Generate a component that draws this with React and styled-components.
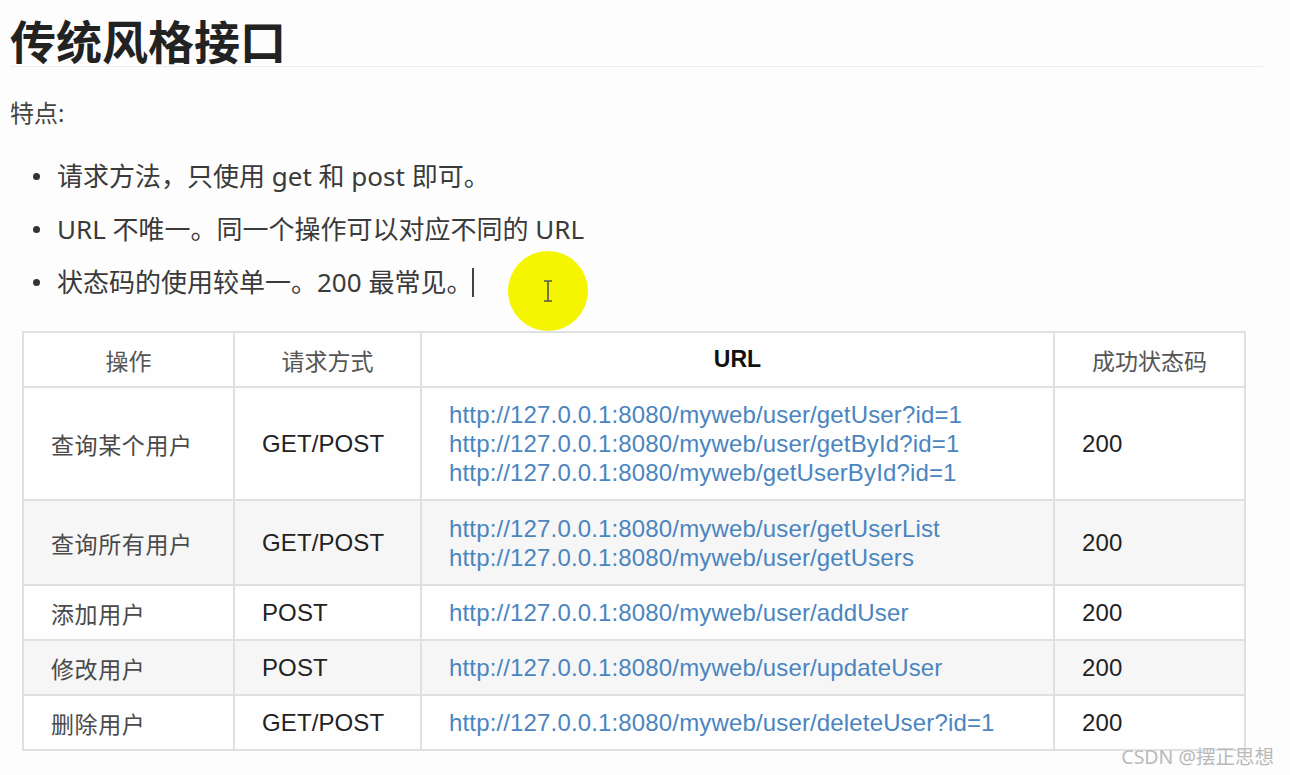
import React from "react";
import styled, { createGlobalStyle } from "styled-components";

const GlobalStyle = createGlobalStyle`
  html, body {
    margin: 0;
    padding: 0;
    background: #fdfdfd;
  }
  body {
    font-family: "Noto Sans", "Noto Sans CJK SC", sans-serif;
    color: #333;
  }
`;

const Page = styled.div`
  position: relative;
  width: 1290px;
  height: 775px;
  overflow: hidden;
  padding: 12px 27px 0 10px;
  box-sizing: border-box;
`;

const Title = styled.h1`
  margin: 0;
  font-family: "Noto Sans CJK SC", sans-serif;
  font-size: 46px;
  font-weight: 700;
  line-height: 54px;
  color: #222;
  border-bottom: 1px solid #ececec;
`;

const Lead = styled.p`
  margin: 28px 0 0;
  font-size: 24px;
  line-height: 36px;
  color: #444;
`;

const List = styled.ul`
  list-style: none;
  margin: 27px 0 0;
  padding: 0 0 0 23px;
  display: flex;
  flex-direction: column;
  gap: 16px;
`;

const Item = styled.li`
  display: flex;
  align-items: center;
  gap: 17px;
  font-size: 26px;
  line-height: 37px;
  color: #3a3a3a;

  &::before {
    content: "";
    width: 7px;
    height: 7px;
    border-radius: 50%;
    background: #333;
    flex-shrink: 0;
  }
`;

const Caret = styled.span`
  display: inline-block;
  width: 2px;
  height: 29px;
  margin-left: 0;
  vertical-align: -5px;
  background: #444;
`;

const Spotlight = styled.div`
  position: absolute;
  left: 508px;
  top: 251px;
  width: 80px;
  height: 80px;
  border-radius: 50%;
  background: #f5f500;
  display: flex;
  align-items: center;
  justify-content: center;
`;

const Table = styled.table`
  margin: 30px 0 0 12px;
  width: 1222px;
  border-collapse: collapse;
  table-layout: fixed;
  border: 2px solid #e0e0e0;
`;

const Row = styled.tr`
  height: ${(p) => p.$h}px;
  background: ${(p) => (p.$shade ? "#f6f6f6" : "#fefefe")};
`;

const Head = styled.th`
  border: 2px solid #e0e0e0;
  padding: 0;
  text-align: center;
  font-family: ${(p) =>
    p.$latin ? '"Liberation Sans", Arial, sans-serif' : '"Noto Sans CJK SC", sans-serif'};
  font-size: 23px;
  font-weight: ${(p) => (p.$latin ? 700 : 400)};
  color: ${(p) => (p.$latin ? "#111" : "#555")};
`;

const Cell = styled.td`
  border: 2px solid #e0e0e0;
  padding: 0 0 0 27px;
  vertical-align: middle;
  font-family: ${(p) =>
    p.$cjk ? '"Noto Sans CJK SC", sans-serif' : '"Liberation Sans", Arial, sans-serif'};
  font-size: ${(p) => (p.$cjk ? "23px" : "24px")};
  letter-spacing: ${(p) => (p.$cjk ? "0.6px" : "0.1px")};
  color: ${(p) => (p.$cjk ? "#4a4a4a" : "#222")};
`;

const Link = styled.div`
  font-family: "Liberation Sans", Arial, sans-serif;
  font-size: 24px;
  letter-spacing: 0.15px;
  line-height: 29px;
  color: #4a85c0;
`;

const Mark = styled.div`
  position: absolute;
  right: 16px;
  bottom: 5px;
  font-family: "Noto Sans", "Noto Sans CJK SC", sans-serif;
  font-size: 19.5px;
  color: #b9b9b9;
  text-shadow: 0 0 2px #fff, 0 0 1px #fff;
`;

const rows = [
  { op: "查询某个用户", method: "GET/POST", h: 113, urls: [
    "http://127.0.0.1:8080/myweb/user/getUser?id=1",
    "http://127.0.0.1:8080/myweb/user/getById?id=1",
    "http://127.0.0.1:8080/myweb/getUserById?id=1",
  ] },
  { op: "查询所有用户", method: "GET/POST", h: 85, shade: true, urls: [
    "http://127.0.0.1:8080/myweb/user/getUserList",
    "http://127.0.0.1:8080/myweb/user/getUsers",
  ] },
  { op: "添加用户", method: "POST", h: 55, urls: ["http://127.0.0.1:8080/myweb/user/addUser"] },
  { op: "修改用户", method: "POST", h: 55, shade: true, urls: ["http://127.0.0.1:8080/myweb/user/updateUser"] },
  { op: "删除用户", method: "GET/POST", h: 55, urls: ["http://127.0.0.1:8080/myweb/user/deleteUser?id=1"] },
];

export default function App() {
  return (
    <>
      <GlobalStyle />
      <Page>
        <Title>传统风格接口</Title>
        <Lead>特点:</Lead>
        <List>
          <Item>请求方法，只使用 get 和 post 即可。</Item>
          <Item>URL 不唯一。同一个操作可以对应不同的 URL</Item>
          <Item>
            <span>
              状态码的使用较单一。200 最常见。
              <Caret />
            </span>
          </Item>
        </List>
        <Spotlight>
          <svg width="12" height="24" viewBox="0 0 12 24">
            <path
              d="M2 2h8M6 2v20M2 22h8"
              stroke="#555"
              strokeWidth="1.6"
              fill="none"
            />
          </svg>
        </Spotlight>
        <Table>
          <colgroup>
            <col style={{ width: 211 }} />
            <col style={{ width: 187 }} />
            <col style={{ width: 633 }} />
            <col style={{ width: 191 }} />
          </colgroup>
          <thead>
            <Row $h={55}>
              <Head>操作</Head>
              <Head>请求方式</Head>
              <Head $latin>URL</Head>
              <Head>成功状态码</Head>
            </Row>
          </thead>
          <tbody>
            {rows.map((r) => (
              <Row key={r.op} $h={r.h} $shade={r.shade}>
                <Cell $cjk>{r.op}</Cell>
                <Cell>{r.method}</Cell>
                <Cell>
                  {r.urls.map((u) => (
                    <Link key={u}>{u}</Link>
                  ))}
                </Cell>
                <Cell>200</Cell>
              </Row>
            ))}
          </tbody>
        </Table>
        <Mark>CSDN @摆正思想</Mark>
      </Page>
    </>
  );
}
